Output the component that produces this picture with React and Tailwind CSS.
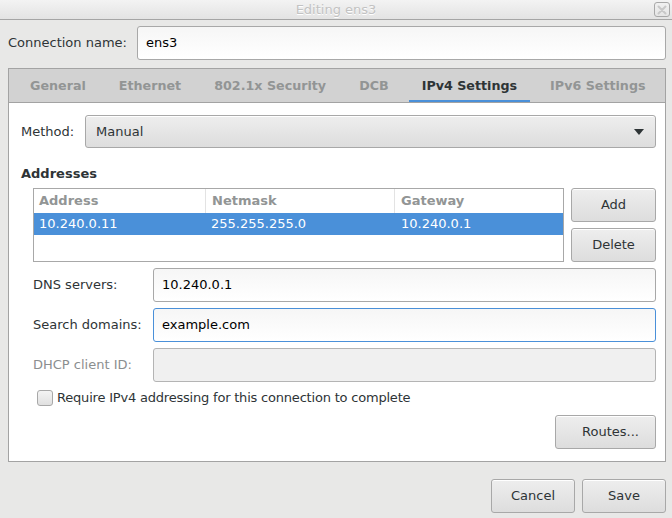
import React from "react";

const inputBase =
  "h-[34px] rounded-[3px] border flex items-center px-[8px] text-[13px]";

function Btn({ children, className = "" }) {
  return (
    <div
      className={
        "flex items-center justify-center rounded-[3px] border border-[#a8a8a8] bg-gradient-to-b from-[#eeeeee] to-[#dddddd] text-[#2e3436] shadow-[inset_0_1px_0_#ffffff] " +
        className
      }
    >
      {children}
    </div>
  );
}

function Tab({ label, active }) {
  return (
    <div className="relative shrink-0 ml-[4px] mr-[3px] px-[13px] h-full flex items-center whitespace-nowrap">
      <span
        className={
          "font-bold text-[12.7px] " +
          (active ? "text-[#2e3436]" : "text-[#929595]")
        }
      >
        {label}
      </span>
      {active && (
        <div className="absolute left-0 right-0 bottom-[-1px] h-[3px] bg-[#4a90d9]" />
      )}
    </div>
  );
}

export default function App() {
  return (
    <div className="w-[672px] h-[518px] bg-[#e8e8e7] font-['DejaVu_Sans',sans-serif] text-[13px] text-[#2e3436] flex flex-col overflow-hidden">
      {/* title bar */}
      <div className="relative h-[20px] shrink-0 border-b border-[#a5a5a5] bg-gradient-to-b from-[#f3f3f3] to-[#e3e3e3] flex items-center justify-center">
        <span className="text-[13px] text-[#c2c2c2] [text-shadow:0_1px_0_#ffffff]">
          Editing ens3
        </span>
        <div className="absolute right-[2px] top-[2px] w-[16px] h-[15px] rounded-[3px] border border-[#a8a8a8] flex items-center justify-center">
          <svg width="10" height="10" viewBox="0 0 10 10">
            <path
              d="M1.5 1.5 L8.5 8.5 M8.5 1.5 L1.5 8.5"
              stroke="#c8c8c8"
              strokeWidth="2"
              strokeLinecap="round"
            />
          </svg>
        </div>
      </div>

      {/* connection name */}
      <div className="flex items-center pl-[8px] pr-[6px] mt-[6px]">
        <span className="w-[129px] shrink-0">Connection name:</span>
        <div
          className={
            inputBase +
            " flex-1 h-[33px] border-[#a8a8a8] bg-gradient-to-b from-[#f6f6f6] to-[#ffffff] text-[#000000]"
          }
        >
          ens3
        </div>
      </div>

      {/* notebook */}
      <div className="mt-[8px] ml-[8px] w-[658px] border border-[#a3a3a3] flex flex-col">
        <div className="h-[34px] bg-[#d2d2d2] border-b border-[#a3a3a3] flex items-stretch pl-[4px] overflow-hidden">
          <Tab label="General" />
          <Tab label="Ethernet" />
          <Tab label="802.1x Security" />
          <Tab label="DCB" />
          <Tab label="IPv4 Settings" active />
          <Tab label="IPv6 Settings" />
        </div>

        <div className="bg-white pt-[12px] pl-[12px] pr-[9px] pb-[12px] flex flex-col">
          {/* method */}
          <div className="flex items-center">
            <span className="w-[64px] shrink-0">Method:</span>
            <Btn className="flex-1 h-[33px] !justify-between px-[10px]">
              <span>Manual</span>
              <svg width="10" height="6" viewBox="0 0 10 6" className="mr-[1px]">
                <path d="M0 0 L10 0 L5 6 Z" fill="#2e3436" />
              </svg>
            </Btn>
          </div>

          <div className="mt-[18px] font-bold leading-[16px]">Addresses</div>

          <div className="mt-[6px] ml-[12px] flex gap-[7px]">
            <div className="flex-1 h-[74px] border border-[#a8a8a8] bg-white flex flex-col">
              <div className="h-[24px] flex font-bold text-[#929595]">
                <div className="w-[172px] pl-[5px] flex items-center border-r border-[#e3e3e3]">
                  Address
                </div>
                <div className="w-[189px] pl-[6px] flex items-center border-r border-[#e3e3e3]">
                  Netmask
                </div>
                <div className="flex-1 pl-[6px] flex items-center">Gateway</div>
              </div>
              <div className="h-[22px] flex bg-[#4a90d9] text-white">
                <div className="w-[172px] pl-[5px] flex items-center">10.240.0.11</div>
                <div className="w-[189px] pl-[5px] flex items-center">255.255.255.0</div>
                <div className="flex-1 pl-[6px] flex items-center">10.240.0.1</div>
              </div>
            </div>
            <div className="w-[85px] flex flex-col gap-[6px]">
              <Btn className="h-[34px]">Add</Btn>
              <Btn className="h-[34px]">Delete</Btn>
            </div>
          </div>

          {/* dns etc */}
          <div className="ml-[12px] mt-[6px] flex flex-col gap-[6px]">
            <div className="flex items-center">
              <span className="w-[120px] shrink-0">DNS servers:</span>
              <div
                className={
                  inputBase +
                  " flex-1 border-[#a8a8a8] bg-gradient-to-b from-[#f6f6f6] to-[#ffffff] text-[#000000]"
                }
              >
                10.240.0.1
              </div>
            </div>
            <div className="flex items-center">
              <span className="w-[120px] shrink-0">Search domains:</span>
              <div
                className={
                  inputBase +
                  " flex-1 border-[#4a90d9] bg-gradient-to-b from-[#f6f6f6] to-[#ffffff] text-[#000000]"
                }
              >
                example.com
              </div>
            </div>
            <div className="flex items-center">
              <span className="w-[120px] shrink-0 text-[#8b8e8f]">DHCP client ID:</span>
              <div className={inputBase + " flex-1 border-[#b4b4b4] bg-[#f0f0f0]"} />
            </div>
          </div>

          <div className="ml-[16px] mt-[8px] flex items-center h-[16px]">
            <div className="w-[16px] h-[16px] rounded-[3px] border border-[#a8a8a8] bg-gradient-to-b from-[#f4f4f4] to-[#e0e0e0]" />
            <span className="ml-[4px] tracking-[-0.2px]">
              Require IPv4 addressing for this connection to complete
            </span>
          </div>

          <div className="mt-[9px] flex justify-end">
            <Btn className="w-[101px] h-[34px] !justify-end pr-[16px]">Routes...</Btn>
          </div>
        </div>
      </div>

      {/* bottom buttons */}
      <div className="mt-[17px] pr-[6px] flex justify-end gap-[7px]">
        <Btn className="w-[84px] h-[34px]">Cancel</Btn>
        <Btn className="w-[84px] h-[34px]">Save</Btn>
      </div>
    </div>
  );
}
